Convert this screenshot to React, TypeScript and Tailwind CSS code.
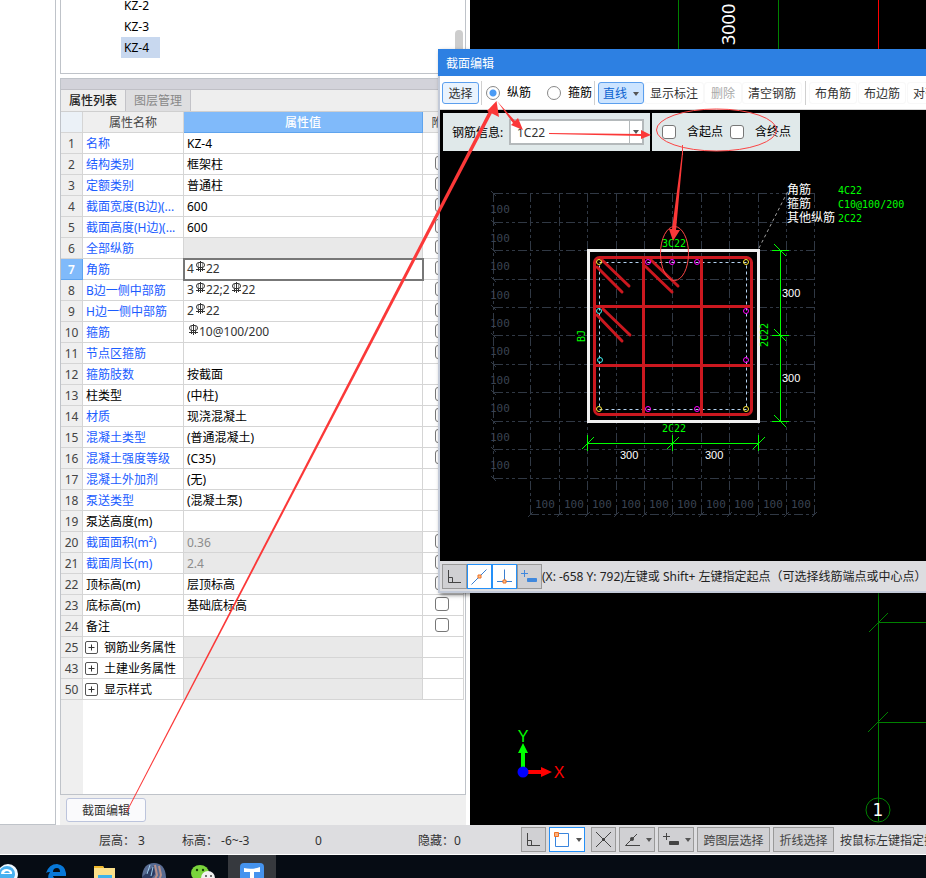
import type { ReactNode } from "react";
import clsx from "clsx";

type Kind = "link" | "plain" | "group";
type Row = { no: number; name: string; value?: ReactNode; kind?: Kind; check?: boolean; shaded?: boolean; active?: boolean; rebar?: boolean };

function Rebar() {
  return (
    <svg className="ml-px inline-block align-baseline" width="11" height="12" viewBox="0 0 11 12" fill="none" stroke="#333" strokeWidth="1">
      <path d="M5.500 0v11M1 8.500h9M3.500 7v3M7.500 7v3" />
      <rect x="1.500" y="1.500" width="8" height="5" rx="2.500" />
      <path d="M3.500 2v5M7.500 2v5" strokeOpacity="0.5" />
    </svg>
  );
}

const rows: Row[] = [
  { no: 1, name: "名称", value: "KZ-4" },
  { no: 2, name: "结构类别", value: "框架柱", check: true },
  { no: 3, name: "定额类别", value: "普通柱", check: true },
  { no: 4, name: "截面宽度(B边)(...", value: "600", check: true },
  { no: 5, name: "截面高度(H边)(...", value: "600", check: true },
  { no: 6, name: "全部纵筋", shaded: true, check: true },
  { no: 7, name: "角筋", value: <>4<Rebar />22</>, check: true, active: true, rebar: true },
  { no: 8, name: "B边一侧中部筋", value: <>3<Rebar />22;2<Rebar />22</>, check: true, rebar: true },
  { no: 9, name: "H边一侧中部筋", value: <>2<Rebar />22</>, check: true, rebar: true },
  { no: 10, name: "箍筋", value: <><Rebar />10@100/200</>, check: true, rebar: true },
  { no: 11, name: "节点区箍筋", check: true },
  { no: 12, name: "箍筋肢数", value: "按截面" },
  { no: 13, name: "柱类型", value: "(中柱)", kind: "plain", check: true },
  { no: 14, name: "材质", value: "现浇混凝土", check: true },
  { no: 15, name: "混凝土类型", value: "(普通混凝土)", check: true },
  { no: 16, name: "混凝土强度等级", value: "(C35)", check: true },
  { no: 17, name: "混凝土外加剂", value: "(无)" },
  { no: 18, name: "泵送类型", value: "(混凝土泵)" },
  { no: 19, name: "泵送高度(m)", kind: "plain" },
  { no: 20, name: "截面面积(m²)", value: "0.36", shaded: true, check: true },
  { no: 21, name: "截面周长(m)", value: "2.4", shaded: true, check: true },
  { no: 22, name: "顶标高(m)", value: "层顶标高", kind: "plain", check: true },
  { no: 23, name: "底标高(m)", value: "基础底标高", kind: "plain", check: true },
  { no: 24, name: "备注", kind: "plain", check: true },
  { no: 25, name: "钢筋业务属性", kind: "group", shaded: true },
  { no: 43, name: "土建业务属性", kind: "group", shaded: true },
  { no: 50, name: "显示样式", kind: "group", shaded: true },
];

const boxClass = "m-0 block size-[14px] shrink-0 appearance-none rounded-[3px] border border-[#777] bg-white";

function PropertyTable() {
  return (
    <table className="w-[403px] table-fixed border-separate border-spacing-0">
      <colgroup>
        <col className="w-[22px]" />
        <col className="w-[101px]" />
        <col className="w-[239px]" />
        <col className="w-[41px]" />
      </colgroup>
      <thead>
        <tr className="h-[21px] text-[#444]">
          <th className="border-r border-b border-[#d5d5d5] bg-[#ebf1f7] p-0" aria-label="序号" />
          <th className="border-r border-b border-[#d5d5d5] bg-[#efefef] p-0 pt-[2px] font-normal">属性名称</th>
          <th className="border-r border-b border-[#5fa4ee] bg-[#80bafa] p-0 pt-[2px] font-medium text-white">属性值</th>
          <th className="border-b border-[#d5d5d5] bg-[#efefef] p-0 pt-[2px] font-normal">附加</th>
        </tr>
      </thead>
      <tbody>
        {rows.map((r) => (
          <tr key={r.no} className="h-[21px]">
            <th
              className={clsx(
                "border-r border-b p-0 pt-[2px] font-normal",
                r.active ? "border-[#5fa4ee] bg-[#80bafa] font-semibold text-white" : "border-[#d5d5d5] bg-[#efefef] text-[#444]",
              )}
            >
              {r.no}
            </th>
            <td className={clsx("overflow-hidden border-r border-b border-[#d5d5d5] pr-0 pb-0 whitespace-nowrap", r.kind ? "text-black" : "text-[#1a5cff]", r.kind === "group" ? "pt-0 pl-[2px]" : "pt-[2px] pl-[3px]")}>
              {r.kind === "group" ? (
                <span className="flex items-center gap-[6px]">
                  <button type="button" aria-label={"展开" + r.name} className="flex size-[13px] items-center justify-center rounded-[2px] border border-[#555] bg-white">
                    <svg width="7" height="7" viewBox="0 0 7 7" stroke="#333"><path d="M0.5 3.5h6M3.5 0.5v6" /></svg>
                  </button>
                  <span className="pt-[2px]">{r.name}</span>
                </span>
              ) : (
                r.name
              )}
            </td>
            <td
              className={clsx(
                "border-r border-b border-[#d5d5d5] pr-0 pb-0 pl-[3px] whitespace-nowrap",
                r.rebar ? "pt-0" : "pt-[2px]",
                r.shaded ? "bg-[#e9e9e9] text-[#8c8c8c]" : r.rebar ? "text-[#333]" : "text-black",
                r.active && "outline-2 -outline-offset-1 outline-[#777]",
              )}
            >
              {r.value}
            </td>
            <td className="border-r border-b border-[#d5d5d5] pt-0 pr-0 pb-[2px] pl-3">
              {r.check && <input type="checkbox" aria-label={"附加 " + r.name} className={boxClass} />}
            </td>
          </tr>
        ))}
      </tbody>
    </table>
  );
}

function LeftPanel() {
  return (
    <div className="flex w-[406px] shrink-0 flex-col">
      <div className="flex h-[74px] shrink-0 justify-between overflow-hidden border-x border-b border-[#bfc3c9] bg-white pl-[60px]">
        <ul className="-mt-[5px]">
          {["KZ-2", "KZ-3", "KZ-4"].map((k) => (
            <li key={k} className={clsx("h-[21px] w-[39px] pl-[3px] leading-[21px]", k === "KZ-4" && "bg-[#c8d8ef]")}>{k}</li>
          ))}
        </ul>
        <div className="mt-[30px] mr-[2px] w-2 rounded-t-full bg-[#cdcdcd]" />
      </div>
      <section className="mt-1 flex min-h-0 flex-1 flex-col border border-b-0 border-[#bfc3c9]">
        <div className="h-[11px] shrink-0 border-b border-[#c0c0c6] bg-[#d3d3da]" />
        <div className="flex h-[22px] shrink-0 border-b border-[#cfcfcf] bg-[#eee]" role="tablist">
          <button type="button" role="tab" aria-selected="true" className="w-[65px] border-r border-[#c3c3c8] font-medium text-[#222]">属性列表</button>
          <button type="button" role="tab" aria-selected="false" className="w-[65px] border-r border-[#c3c3c8] bg-[#dedee0] text-[#888]">图层管理</button>
        </div>
        <div className="flex min-h-0 flex-1 flex-col overflow-hidden bg-white">
          <PropertyTable />
          <div className="w-[22px] flex-1 bg-[#efefef]" />
        </div>
      </section>
      <div className="flex h-[31px] shrink-0 items-center border-t border-[#bfc3c9] bg-[#efefef] pl-[6px]">
        <button type="button" className="h-6 w-20 rounded-[3px] border border-[#bcc4dc] bg-[#fafafc] pt-[2px] text-[#333]">截面编辑</button>
      </div>
    </div>
  );
}

function Drawing() {
  return (
    <div className="min-w-0 flex-1 overflow-hidden bg-black">
      <svg className="block h-full w-full" fill="none" stroke="#008000" fontFamily="'Noto Sans', sans-serif" role="img" aria-label="轴网图">
        <path d="M208.5 0v60M308.5 0v60M408.5 590V821M408.5 622.5H900M408.5 722.5H900M399 632l19-19M398 732l20-20" />
        <path d="M408.5 0v60" stroke="#ff0000" />
        <circle cx="408" cy="810" r="12" />
        <g stroke="none">
          <text transform="translate(265 45) rotate(-90)" fontSize="18" fill="#fff">3000</text>
          <text x="408" y="816" fontSize="17" fontFamily="'DejaVu Sans', sans-serif" textAnchor="middle" fill="#fff">1</text>
          <path d="M51 767V753H48L53 743l5 10h-3v14z" fill="#00ff00" />
          <path d="M58 770h13v-3l11 5-11 5v-3H58z" fill="#ff0000" />
          <circle cx="53" cy="772" r="5.5" fill="#0000ff" />
        </g>
        <g stroke="none" fontSize="16" textAnchor="middle" fontFamily="'Liberation Sans', sans-serif">
          <text x="53" y="742" fill="#00ff00">Y</text>
          <text x="89" y="778" fill="#ff0000">X</text>
        </g>
      </svg>
    </div>
  );
}

const gx = [530, 559, 587, 616, 644, 672, 701, 729, 758, 786, 814];
const gy = [193, 222, 250, 279, 307, 335, 364, 392, 421, 449, 478];
const dots: [number, number, string][] = [
  [599, 262, "#ffe838"], [746, 262, "#ffe838"], [599, 409, "#ffe838"], [746, 409, "#ffe838"],
  [648, 262, "#ff00ff"], [672, 262, "#ff00ff"], [697, 262, "#ff00ff"], [746, 311, "#ff00ff"],
  [746, 360, "#ff00ff"], [648, 409, "#ff00ff"], [697, 409, "#ff00ff"], [599, 311, "#40f0f0"], [600, 360, "#40f0f0"],
];

function SectionDrawing() {
  return (
    <svg className="block h-full w-full" viewBox="440 151 486 410" preserveAspectRatio="xMinYMin slice" fill="none" role="img" aria-label="柱截面配筋图">
      <g stroke="#303844" strokeDasharray="9 3 3 3 3 3">
        {gy.map((y) => <path key={y} d={`M494 ${y + 0.5}H815`} />)}
        {gx.map((x) => <path key={x} d={`M${x + 0.5} 193V515`} />)}
        <path d="M493.5 193V478M530 514.5H815" />
      </g>
      <g stroke="#303844">
        {gy.map((y) => <path key={y} d={`M491 ${y - 2}l5 5`} />)}
        {gx.map((x) => <path key={x} d={`M${x - 2} 517l5 -5`} />)}
      </g>
      <g fill="#3a4352" fontSize="11" fontFamily="'DejaVu Sans Mono', monospace">
        {gy.slice(0, 10).map((y) => <text key={y} x="490" y={y + 20}>100</text>)}
        {gx.slice(0, 10).map((x) => <text key={x} x={x + 5} y="508">100</text>)}
      </g>
      <path d="M759 248L788 191" stroke="#a0a0a0" strokeDasharray="3 3" />
      <path d="M588.5 250.5h170v171h-170z" stroke="#f0f0f0" strokeWidth="3" />
      <path d="M599.5 262.5h147v147h-147z" stroke="#b4d2f0" strokeDasharray="3 3" />
      <g stroke="#cb181f" strokeWidth="3" strokeLinecap="round">
        <rect x="594.5" y="257.5" width="157" height="157" rx="5" />
        <path d="M643.5 258v156M701.5 258v156M595 306.5h156M595 365.5h156" />
        <path d="M597 267l25 25M602 260l27 26M645 266l27 26M651 260l27 26M597 315l25 26M603 309l27 26" />
      </g>
      {dots.map(([x, y, c]) => <circle key={x + "-" + y} cx={x} cy={y} r="2.5" stroke={c} />)}
      <g stroke="#00ff00">
        <path d="M780.5 250V421M772 250.5h17M772 335.5h17M772 421.5h17M774 244l12 12M774 329l12 12M774 415l12 12" />
        <path d="M587 443.5H758M587.5 435v16M672.5 435v16M758.5 435v16M582 449l12-12M667 449l12-12M753 449l12-12" />
      </g>
      <g fill="#00ff00" fontSize="10" fontFamily="'DejaVu Sans Mono', monospace">
        <text x="662" y="247">3C22</text>
        <text x="662" y="432">2C22</text>
        <text transform="translate(585 342) rotate(-90)">BJ</text>
        <text transform="translate(768 347) rotate(-90)">2C22</text>
        <text x="838" y="194">4C22</text>
        <text x="838" y="208">C10@100/200</text>
        <text x="838" y="222">2C22</text>
      </g>
      <g fill="#fff" fontSize="11" fontFamily="'Liberation Sans', sans-serif">
        <text x="620" y="459">300</text>
        <text x="705" y="459">300</text>
        <text x="782" y="297">300</text>
        <text x="782" y="382">300</text>
      </g>
      <g fill="#fff" fontSize="12" fontFamily="'Noto Sans CJK SC', sans-serif">
        <text x="787" y="194">角筋</text>
        <text x="787" y="208">箍筋</text>
        <text x="787" y="222">其他纵筋</text>
      </g>
    </svg>
  );
}

function Caret() {
  return <svg width="6" height="4" viewBox="0 0 6 4"><path d="M0 0h6L3 4z" fill="#555" /></svg>;
}

function Sep() {
  return <span className="h-6 w-px shrink-0 bg-[#d0d0d0]" />;
}

function ToolButton({ children, className }: { children: ReactNode; className: string }) {
  return <button type="button" className={clsx("h-[22px] shrink-0 rounded-[3px] border pt-[2px] whitespace-nowrap", className)}>{children}</button>;
}

const radioClass = "m-0 size-[14px] appearance-none rounded-full border border-[#888] bg-white checked:bg-[radial-gradient(circle,#4a9bf5_3px,white_4px)]";

function SectionEditor() {
  return (
    <div role="dialog" aria-label="截面编辑" className="absolute top-[49px] right-0 left-[438px] flex h-[544px] flex-col overflow-hidden shadow-[2px_2px_4px_rgba(0,0,0,0.5)]">
      <h2 className="flex h-[27px] shrink-0 items-center bg-[#2d80e2] pt-[2px] pl-2 text-white">截面编辑</h2>
      <div className="flex min-h-0 flex-1 flex-col border-b-2 border-l-2 border-[#c3cad8]">
        <div className="flex h-[34px] shrink-0 items-center overflow-hidden border-b border-[#d8d8d8] bg-white pl-[2px] text-[#333]">
          <ToolButton className="w-[37px] border-[#5b9fee] bg-[#e9f3fe]">选择</ToolButton>
          <span className="ml-[2px] flex"><Sep /></span>
          <label className="ml-1 flex shrink-0 items-center gap-[7px] text-black">
            <input type="radio" name="bar" defaultChecked className={radioClass} />纵筋
          </label>
          <label className="mr-[2px] ml-4 flex shrink-0 items-center gap-[7px] text-black">
            <input type="radio" name="bar" className={radioClass} />箍筋
          </label>
          <Sep />
          <ToolButton className="ml-[3px] flex w-[46px] items-center justify-center gap-[6px] border-[#5b9fee] bg-[#cce4ff] text-[#0a62d0]">直线<Caret /></ToolButton>
          <ToolButton className="w-[60px] border-[#f8f8f8]">显示标注</ToolButton>
          <ToolButton className="w-[38px] border-[#f8f8f8] text-[#aaa]">删除</ToolButton>
          <ToolButton className="mr-[3px] w-[60px] border-[#f8f8f8]">清空钢筋</ToolButton>
          <Sep />
          <ToolButton className="ml-[3px] w-12 border-[#f8f8f8]">布角筋</ToolButton>
          <ToolButton className="ml-px w-12 border-[#f8f8f8]">布边筋</ToolButton>
          <ToolButton className="ml-px w-12 border-[#f8f8f8]">对齐筋</ToolButton>
        </div>
        <div className="flex min-h-0 flex-1 flex-col overflow-hidden bg-black">
          <div className="mt-[3px] ml-[3px] flex h-[38px] shrink-0 gap-[2px] text-black">
            <div className="flex w-[207px] items-center bg-[#e0e9ea] pl-[9px]">
              <label htmlFor="info" className="w-[57px] pt-[2px]">钢筋信息:</label>
              <div className="flex h-[26px] w-[135px] border-2 border-[#b4b9bb] bg-white">
                <input id="info" defaultValue="1C22" className="w-[119px] border-r border-[#b4b9bb] pt-[2px] pl-[6px] text-[#333] outline-none" />
                <button type="button" aria-label="下拉" className="flex flex-1 items-center justify-center"><Caret /></button>
              </div>
            </div>
            <div className="flex w-[148px] items-center gap-[7px] bg-[#e0e9ea] pl-[10px]">
              <label className="flex items-center gap-[11px]"><input type="checkbox" className={boxClass} />含起点</label>
              <label className="flex items-center gap-[11px]"><input type="checkbox" className={boxClass} />含终点</label>
            </div>
          </div>
          <div className="min-h-0 flex-1"><SectionDrawing /></div>
        </div>
        <div className="flex h-[30px] shrink-0 items-center bg-[#dddde0] pl-[2px] whitespace-nowrap text-[#222]">
          <IconButton label="正交" className="w-[25px] border-[#999] bg-[#d0d0d3]"><OrthoIcon /></IconButton>
          <IconButton label="中点" className="w-[25px] border-[#2490f8] bg-white">
            <svg width="19" height="19" viewBox="0 0 19 19" fill="none" stroke="#3a7fd0"><path d="M1.5 17.5l15-15" /><path d="M8 8h3v3H8z" fill="#f9c090" stroke="#f07020" /></svg>
          </IconButton>
          <IconButton label="垂点" className="w-[25px] border-[#2490f8] bg-white">
            <svg width="19" height="19" viewBox="0 0 19 19" fill="none" stroke="#3a7fd0"><path d="M9.5 2.5v13M2 14.5h15" /><path d="M8 13h3v3H8z" fill="#f9c090" stroke="#f07020" /></svg>
          </IconButton>
          <IconButton label="动态输入" className="w-[25px] border-[#999] bg-[#d0d0d3]"><InputIcon color="#4088dd" /></IconButton>
          <span className="pt-[2px]">(X: -658 Y: 792)左键或 Shift+ 左键指定起点（可选择线筋端点或中心点）</span>
        </div>
      </div>
    </div>
  );
}

function IconButton({ label, className, children }: { label: string; className: string; children: ReactNode }) {
  return <button type="button" aria-label={label} className={clsx("flex h-[25px] shrink-0 items-center justify-center border", className)}>{children}</button>;
}

function OrthoIcon() {
  return <svg width="19" height="19" viewBox="0 0 19 19" fill="none" stroke="#444"><path d="M3.5 3v12.5H16M3.5 10.5h4v5" /></svg>;
}

function InputIcon({ color }: { color: string }) {
  return (
    <svg width="19" height="19" viewBox="0 0 19 19" fill="none" stroke={color}>
      <path d="M1 6.5h7M4.5 3v7" /><path d="M7.500 11.500h9v3h-9z" fill={color} />
    </svg>
  );
}

function StatusBar() {
  const grey = "border-[#999] bg-[#d0d0d3] text-[#444]";
  return (
    <footer className="flex h-[30px] shrink-0 items-center overflow-hidden border-b border-white bg-[#dddde0] whitespace-nowrap text-[#333]">
      <span className="ml-[99px] w-[83px] shrink-0 pt-[2px]">层高： 3</span>
      <span className="w-[133px] shrink-0 pt-[2px]">标高： -6~-3</span>
      <span className="w-[103px] shrink-0 pt-[2px]">0</span>
      <span className="w-[103px] shrink-0 pt-[2px]">隐藏：0</span>
      <div className="flex shrink-0 items-center gap-[3px]">
        <IconButton label="正交" className={clsx("w-[25px]", grey)}><OrthoIcon /></IconButton>
        <IconButton label="对象捕捉" className="mr-[3px] w-9 gap-[6px] border-[#2490f8] bg-white">
          <svg width="17" height="17" viewBox="0 0 17 17" fill="none" stroke="#3a85dd"><path d="M2.500 2.500h13v13h-13z" /><path d="M1.500 1.500h4v4h-4z" fill="#f9b080" stroke="#f07020" /></svg>
          <Caret />
        </IconButton>
        <IconButton label="交点" className={clsx("w-[25px]", grey)}>
          <svg width="19" height="19" viewBox="0 0 19 19" stroke="#444"><path d="M2 2l15 15M17 2L2 17" /><path d="M8 8h3v3H8z" fill="#444" stroke="none" /></svg>
        </IconButton>
        <IconButton label="角度" className={clsx("w-9 gap-1", grey)}>
          <svg width="19" height="19" viewBox="0 0 19 19" fill="none" stroke="#444"><path d="M14 4L2.500 15.500H17" /><circle cx="9" cy="9" r="2" fill="#444" stroke="none" /></svg>
          <Caret />
        </IconButton>
        <IconButton label="动态输入" className={clsx("w-9 gap-1", grey)}><InputIcon color="#444" /><Caret /></IconButton>
        <button type="button" className={clsx("h-[25px] w-[73px] border pt-[2px]", grey)}>跨图层选择</button>
        <button type="button" className={clsx("h-[25px] w-[61px] border pt-[2px]", grey)}>折线选择</button>
        <span className="ml-[3px] pt-[2px]">按鼠标左键指定插入点</span>
      </div>
    </footer>
  );
}

function Edge({ color }: { color: string }) {
  return (
    <svg width="20" height="20" viewBox="0 0 20 20" aria-hidden="true">
      <path d="M0 9Q3 0 11 0q8 1 9 9v3H7q1 5 12 3v3Q12 22 5 18 0 14 4 8 1 8 0 9zM7 8h7q0-4-3-4-4 0-4 4z" fill={color} fillRule="evenodd" />
    </svg>
  );
}

function Taskbar() {
  return (
    <nav className="flex h-[23px] shrink-0 overflow-hidden bg-[#060c14]" aria-label="任务栏">
      <div className="-ml-[14px] w-12 shrink-0 pt-[9px] pl-3">
        <svg width="20" height="20" viewBox="0 0 20 20" aria-hidden="true">
          <circle cx="10" cy="10" r="10" fill="#eef8ff" /><circle cx="9" cy="10" r="8" fill="#48b0f0" />
          <path d="M3 10q0-5 6-5 6 1 5 5z" fill="#fff" /><path d="M6 9q1-2 3-2t3 2z" fill="#48b0f0" />
        </svg>
      </div>
      <div className="w-12 shrink-0 pt-[9px] pl-3"><Edge color="#0878d8" /></div>
      <div className="w-12 shrink-0 pt-[10px] pl-3">
        <svg width="22" height="20" viewBox="0 0 22 20" aria-hidden="true"><path d="M0 1h9l1 2h11v17H0z" fill="#fbe08a" /><path d="M0 1h9l1 2H0z" fill="#eeb82c" /><path d="M4 10h14v10H4z" fill="#3cb2ea" /></svg>
      </div>
      <div className="w-12 shrink-0 pt-2 pl-3">
        <svg width="24" height="20" viewBox="0 0 24 20" aria-hidden="true"><path d="M0 14Q1 0 12 0t12 14v6H0z" fill="#576b92" /><path d="M0 14L12 3l1 8-7 9H0z" fill="#2c3c62" /><path d="M13 2l2 10-4 8M17 3l2 9-3 8" stroke="#b89088" strokeWidth="2" fill="none" /><path d="M8 2L5 11M11 4l-2 9" stroke="#9ccbea" /></svg>
      </div>
      <div className="w-[50px] shrink-0 pt-[10px] pl-[13px]">
        <svg width="24" height="20" viewBox="0 0 24 20" aria-hidden="true"><ellipse cx="9" cy="8" rx="9" ry="8" fill="#7ad43c" /><circle cx="6" cy="5" r="1.200" fill="#174208" /><circle cx="12" cy="5" r="1.200" fill="#174208" /><ellipse cx="17" cy="13" rx="7" ry="7" fill="#f1f1f1" /><circle cx="15" cy="11" r="1" fill="#444" /><circle cx="20" cy="11" r="1" fill="#444" /></svg>
      </div>
      <div className="w-12 shrink-0 bg-[#36393e] pt-2 pl-3">
        <svg width="24" height="24" viewBox="0 0 24 24" aria-hidden="true"><rect width="24" height="24" rx="4" fill="#4593ee" /><path d="M4 5q8 2 16-1v5h-6v13h-4V9H4z" fill="#fff" /></svg>
      </div>
    </nav>
  );
}

function Annotations() {
  return (
    <svg className="pointer-events-none absolute inset-0 h-full w-full" fill="#fb3838" aria-hidden="true">
      <path d="M126 812L489 111l3 2L127 812z" />
      <path d="M496.500 101L487 111l12 6z" />
      <path d="M497 101l18 20 3-3 5 12-12-5 2-2z" />
      <path d="M549 133l92 1v-4l10 5-10 4v-3l-92-2z" />
      <path d="M682 153h1l-7 77h4l-7 11-4-12h3z" />
      <g fill="none" stroke="#fb4545">
        <ellipse cx="716.500" cy="130" rx="60" ry="21" />
        <path d="M682.500 145v10" />
        <ellipse cx="674.500" cy="253.500" rx="14" ry="27" />
      </g>
    </svg>
  );
}

export default function App() {
  return (
    <div className="relative flex h-screen min-h-[600px] w-full flex-col overflow-hidden bg-white font-['Noto_Sans','Noto_Sans_CJK_SC',sans-serif] text-[12px] leading-[18px] text-black">
      <main className="flex min-h-0 flex-1">
        <div className="mr-1 w-14 shrink-0 border-r border-b border-[#bfc3c9] bg-white" />
        <LeftPanel />
        <div className="w-1 shrink-0" />
        <Drawing />
      </main>
      <StatusBar />
      <Taskbar />
      <SectionEditor />
      <Annotations />
    </div>
  );
}
